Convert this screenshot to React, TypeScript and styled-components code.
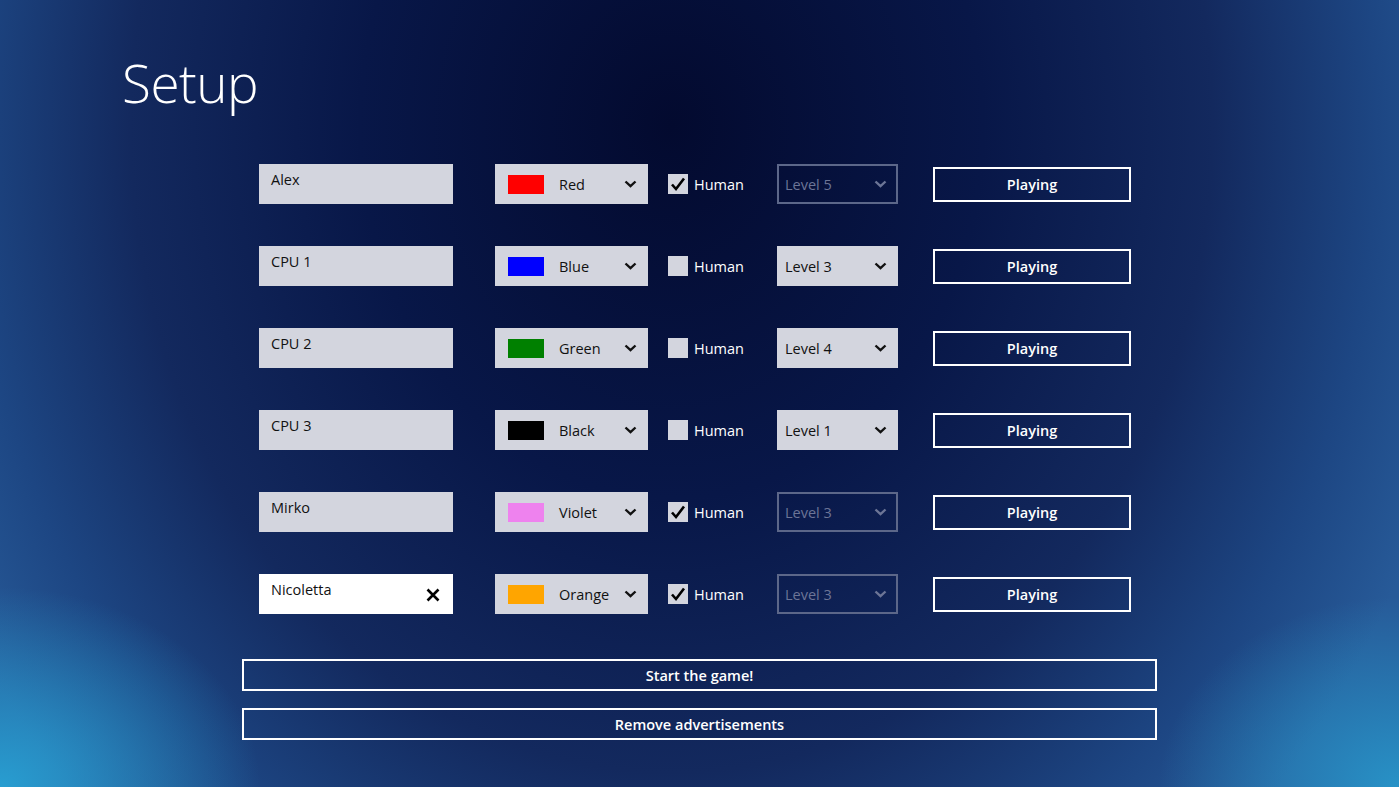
import React from "react";
import styled, { createGlobalStyle } from "styled-components";

const GlobalStyle = createGlobalStyle`
	html, body {
		margin: 0;
		padding: 0;
		height: 100%;
	}
	body {
		font-family: "Open Sans", "Noto Sans", sans-serif;
		overflow: hidden;
	}
`;

const Page = styled.div`
	width: 1399px;
	height: 787px;
	box-sizing: border-box;
	padding: 46px 0 0 122px;
	color: #fff;
	background:
		radial-gradient(ellipse 260px 200px at 0% 100%, rgba(40, 165, 215, 0.9) 0%, rgba(40, 150, 205, 0) 100%),
		radial-gradient(ellipse 240px 190px at 100% 100%, rgba(40, 160, 210, 0.8) 0%, rgba(40, 150, 205, 0) 100%),
		radial-gradient(ellipse 820px 980px at 48% 16%, #030a2f 0%, #081748 38%, #13295e 66%, #1d4683 86%, #275a98 100%);
`;

const Title = styled.h1`
	margin: 0;
	font-family: "Open Sans", sans-serif;
	font-weight: 300;
	font-size: 53px;
	line-height: 74px;
	letter-spacing: -0.5px;
`;

const Grid = styled.div`
	display: grid;
	grid-template-columns: 236px 173px 109px 156px 198px;
	grid-auto-rows: 40px;
	row-gap: 42px;
	margin: 44px 0 0 137px;
	align-items: center;
`;

const NameBox = styled.div<{ focused?: boolean }>`
	width: 194px;
	height: 40px;
	box-sizing: border-box;
	padding: 6px 12px 0 12px;
	display: flex;
	align-items: flex-start;
	justify-content: space-between;
	background: ${p => (p.focused ? "#ffffff" : "#d3d5de")};
	color: #111;
	font-size: 14.5px;
`;

const ClearIcon = styled.svg`
	margin-top: 8px;
	margin-right: 1px;
`;

const Dropdown = styled.div<{ disabled?: boolean }>`
	height: 40px;
	box-sizing: border-box;
	display: flex;
	align-items: center;
	background: ${p => (p.disabled ? "transparent" : "#d3d5de")};
	border: ${p => (p.disabled ? "2px solid #5c6789" : "none")};
	color: ${p => (p.disabled ? "#6c7596" : "#111")};
	font-size: 14.5px;
`;

const ColorSelect = styled(Dropdown)`
	width: 153px;
	padding: 0 11px 0 13px;
`;

const LevelSelect = styled(Dropdown)`
	width: 121px;
	padding: ${p => (p.disabled ? "0 9px 0 6px" : "0 11px 0 8px")};
`;

const Swatch = styled.span<{ color: string }>`
	width: 36px;
	height: 19px;
	background: ${p => p.color};
	margin-right: 15px;
`;

const Label = styled.span`
	flex: 1;
	white-space: nowrap;
`;

const HumanCell = styled.label`
	display: flex;
	align-items: center;
	font-size: 14.5px;
	color: #fff;
`;

const Check = styled.span`
	width: 20px;
	height: 20px;
	background: #d3d5de;
	margin-right: 6px;
	display: flex;
	align-items: center;
	justify-content: center;
`;

const OutlineButton = styled.button`
	box-sizing: border-box;
	border: 2px solid #fff;
	background: transparent;
	color: #fff;
	font-family: "Open Sans", sans-serif;
	font-weight: 600;
	font-size: 14.5px;
	display: flex;
	align-items: center;
	justify-content: center;
	padding: 0;
`;

const PlayButton = styled(OutlineButton)`
	width: 198px;
	height: 35px;
`;

const WideButtons = styled.div`
	display: flex;
	flex-direction: column;
	gap: 17px;
	margin: 45px 0 0 120px;
	width: 915px;
`;

const WideButton = styled(OutlineButton)`
	width: 100%;
	height: 32px;
`;

function Chevron() {
	return (
		<svg width="13" height="8" viewBox="0 0 13 8">
			<polyline points="1.5,1.5 6.5,6.2 11.5,1.5" fill="none" stroke="currentColor" strokeWidth="2.4" />
		</svg>
	);
}

function CheckMark() {
	return (
		<svg width="16" height="16" viewBox="0 0 16 16">
			<polyline points="2,8.5 6,13 14,2.5" fill="none" stroke="#000" strokeWidth="2.6" />
		</svg>
	);
}

interface Player {
	name: string;
	color: string;
	colorName: string;
	human: boolean;
	level: number;
	focused?: boolean;
}

const players: Player[] = [
	{ name: "Alex", color: "#ff0000", colorName: "Red", human: true, level: 5 },
	{ name: "CPU 1", color: "#0000ff", colorName: "Blue", human: false, level: 3 },
	{ name: "CPU 2", color: "#008000", colorName: "Green", human: false, level: 4 },
	{ name: "CPU 3", color: "#000000", colorName: "Black", human: false, level: 1 },
	{ name: "Mirko", color: "#ee82ee", colorName: "Violet", human: true, level: 3 },
	{ name: "Nicoletta", color: "#ffa500", colorName: "Orange", human: true, level: 3, focused: true },
];

export default function App() {
	return (
		<Page>
			<GlobalStyle />
			<Title>Setup</Title>
			<Grid>
				{players.map(p => (
					<React.Fragment key={p.name}>
						<NameBox focused={p.focused}>
							<span>{p.name}</span>
							{p.focused && (
								<ClearIcon width="14" height="14" viewBox="0 0 14 14">
									<path d="M1.5 1.5 L12.5 12.5 M12.5 1.5 L1.5 12.5" stroke="#000" strokeWidth="2.6" />
								</ClearIcon>
							)}
						</NameBox>
						<ColorSelect>
							<Swatch color={p.color} />
							<Label>{p.colorName}</Label>
							<Chevron />
						</ColorSelect>
						<HumanCell>
							<Check>{p.human && <CheckMark />}</Check>
							Human
						</HumanCell>
						<LevelSelect disabled={p.human}>
							<Label>Level {p.level}</Label>
							<Chevron />
						</LevelSelect>
						<PlayButton>Playing</PlayButton>
					</React.Fragment>
				))}
			</Grid>
			<WideButtons>
				<WideButton>Start the game!</WideButton>
				<WideButton>Remove advertisements</WideButton>
			</WideButtons>
		</Page>
	);
}
